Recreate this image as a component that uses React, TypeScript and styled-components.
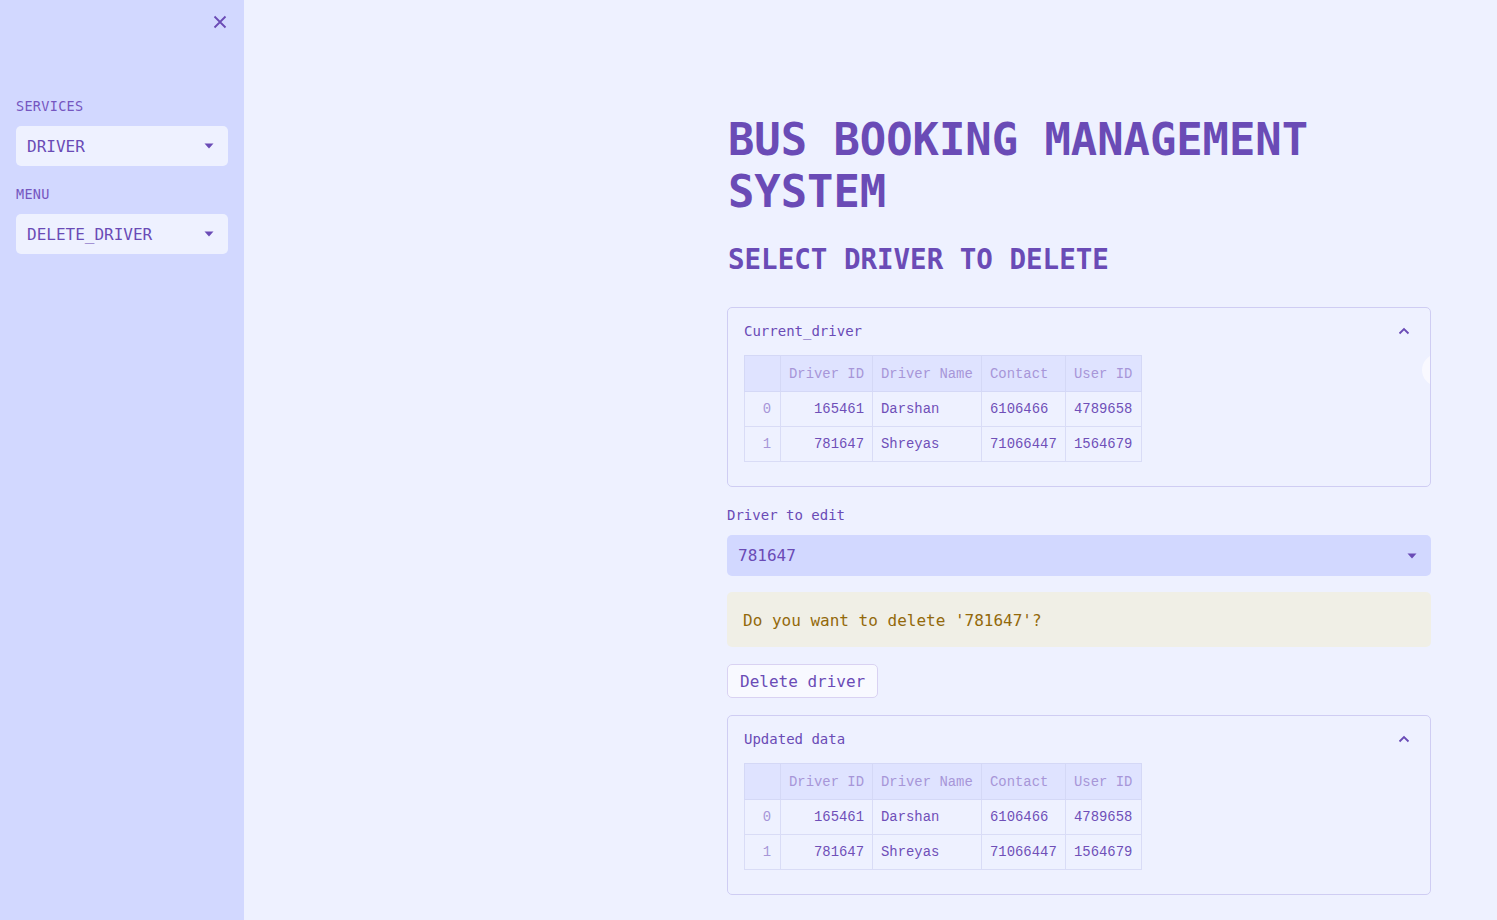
import React from "react";
import styled, { createGlobalStyle } from "styled-components";

const PURPLE = "#6a4bb6";
const MONO = `"DejaVu Sans Mono", "Liberation Mono", monospace`;
const GRID_FONT = `"Liberation Mono", "DejaVu Sans Mono", monospace`;

const GlobalStyle = createGlobalStyle`
  html, body { margin: 0; padding: 0; }
  body {
    background: #eef1ff;
    font-family: ${MONO};
    color: ${PURPLE};
  }
  * { box-sizing: border-box; }
`;

const Layout = styled.div`
  display: flex;
  min-height: 920px;
`;

const Sidebar = styled.aside`
  width: 244px;
  flex: none;
  background: #d2d8ff;
  padding: 0 16px;
  display: flex;
  flex-direction: column;
`;

const CloseRow = styled.div`
  display: flex;
  justify-content: flex-end;
  height: 44px;
  align-items: center;
  padding-right: 0;
  margin-bottom: 52px;
`;

const IconButton = styled.button`
  border: none;
  background: transparent;
  padding: 0;
  width: 16px;
  height: 16px;
  display: flex;
  align-items: center;
  justify-content: center;
  color: ${PURPLE};
  cursor: pointer;
`;

const FieldLabel = styled.div`
  font-size: 13.5px;
  line-height: 20px;
  letter-spacing: 0.3px;
  color: #7556c0;
  margin-bottom: 10px;
`;

const SelectBox = styled.div<{ $tone: "light" | "dark"; $h: number; $mb: number }>`
  height: ${(p) => p.$h}px;
  border-radius: 5px;
  background: ${(p) => (p.$tone === "light" ? "#eef1ff" : "#d2d8ff")};
  display: flex;
  align-items: center;
  justify-content: space-between;
  padding: 0 14px 0 11px;
  font-size: 16px;
  color: ${PURPLE};
  margin-bottom: ${(p) => p.$mb}px;
`;

const Caret = () => (
  <svg width="10" height="6" viewBox="0 0 10 6">
    <path d="M0.5 0.5 H9.5 L5 5.5 Z" fill={PURPLE} />
  </svg>
);

const Main = styled.main`
  flex: 1;
  display: flex;
  justify-content: flex-end;
  padding: 114px 66px 0 0;
`;

const Content = styled.div`
  width: 704px;
  display: flex;
  flex-direction: column;
`;

const Title = styled.h1`
  margin: 0;
  font-family: ${MONO};
  font-weight: 700;
  font-size: 43.8px;
  line-height: 52px;
  color: ${PURPLE};
  padding-left: 1px;
`;

const SubTitle = styled.h2`
  margin: 23px 0 30px;
  font-family: ${MONO};
  font-weight: 700;
  font-size: 27.5px;
  line-height: 36px;
  color: ${PURPLE};
  padding-left: 1px;
`;

const Expander = styled.section<{ $mb: number }>`
  position: relative;
  overflow: hidden;
  border: 1px solid #cfcdf3;
  border-radius: 5px;
  margin-bottom: ${(p) => p.$mb}px;
`;

const ExpanderHeader = styled.div`
  height: 46px;
  display: flex;
  align-items: center;
  justify-content: space-between;
  padding: 0 20px 0 16px;
  font-size: 14px;
  color: ${PURPLE};
`;

const ExpanderBody = styled.div`
  padding: 1px 16px 24px;
`;

const Bubble = styled.div`
  position: absolute;
  right: -24px;
  top: 46px;
  width: 32px;
  height: 32px;
  border-radius: 50%;
  background: #f9f9ff;
`;

const Grid = styled.table`
  border-collapse: collapse;
  table-layout: fixed;
  font-family: ${GRID_FONT};
  font-size: 13.9px;
  color: #6f4fb8;
  background: #eef1ff;
`;

const HeadCell = styled.th<{ $w: number }>`
  width: ${(p) => p.$w}px;
  height: 36px;
  padding: 0 8px;
  text-align: left;
  font-weight: 400;
  color: #a796d8;
  background: #dfe3ff;
  border: 1px solid #d4d8f6;
  white-space: nowrap;
  overflow: hidden;
`;

const Cell = styled.td<{ $align?: "left" | "right"; $muted?: boolean }>`
  height: 35px;
  padding: 0 8px;
  text-align: ${(p) => p.$align ?? "left"};
  color: ${(p) => (p.$muted ? "#a796d8" : "#6f4fb8")};
  border: 1px solid #d9dcf6;
  white-space: nowrap;
`;

const IndexCell = styled(Cell)`
  padding: 0 9px;
  background: #eef1ff;
`;

const InputLabel = styled.div`
  font-size: 14px;
  line-height: 20px;
  color: ${PURPLE};
  margin-bottom: 10px;
`;

const Warning = styled.div`
  background: #f0efe6;
  border-radius: 5px;
  padding: 19px 16px 16px;
  font-size: 16px;
  line-height: 20px;
  color: #93690b;
  margin-bottom: 17px;
`;

const ButtonRow = styled.div`
  display: flex;
  margin-bottom: 17px;
`;

const Button = styled.button`
  height: 34px;
  padding: 0 12px;
  border: 1px solid #d9d2f2;
  border-radius: 5px;
  background: #f8f9ff;
  font-family: ${MONO};
  font-size: 16px;
  color: ${PURPLE};
  cursor: pointer;
`;

const ChevronUp = () => (
  <svg width="12" height="8" viewBox="0 0 12 8">
    <path d="M1.5 6.5 L6 2 L10.5 6.5" fill="none" stroke={PURPLE} strokeWidth="1.8" />
  </svg>
);

const CloseIcon = () => (
  <svg width="14" height="14" viewBox="0 0 14 14">
    <path d="M1.5 1.5 L12.5 12.5 M12.5 1.5 L1.5 12.5" stroke={PURPLE} strokeWidth="1.8" />
  </svg>
);

type Row = { id: string; name: string; contact: string; user: string };
const rows: Row[] = [
  { id: "165461", name: "Darshan", contact: "6106466", user: "4789658" },
  { id: "781647", name: "Shreyas", contact: "71066447", user: "1564679" },
];

const DataTable = () => (
  <Grid>
    <thead>
      <tr>
        <HeadCell $w={36} />
        <HeadCell $w={92}>Driver ID</HeadCell>
        <HeadCell $w={109}>Driver Name</HeadCell>
        <HeadCell $w={84}>Contact</HeadCell>
        <HeadCell $w={76}>User ID</HeadCell>
      </tr>
    </thead>
    <tbody>
      {rows.map((r, i) => (
        <tr key={r.id}>
          <IndexCell $align="right" $muted>
            {i}
          </IndexCell>
          <Cell $align="right">{r.id}</Cell>
          <Cell>{r.name}</Cell>
          <Cell>{r.contact}</Cell>
          <Cell>{r.user}</Cell>
        </tr>
      ))}
    </tbody>
  </Grid>
);

const Panel = ({ title, bubble, mb }: { title: string; bubble?: boolean; mb: number }) => (
  <Expander $mb={mb}>
    <ExpanderHeader>
      <span>{title}</span>
      <ChevronUp />
    </ExpanderHeader>
    <ExpanderBody>
      <DataTable />
    </ExpanderBody>
    {bubble && <Bubble />}
  </Expander>
);

export default function App() {
  return (
    <>
      <GlobalStyle />
      <Layout>
        <Sidebar>
          <CloseRow>
            <IconButton aria-label="close">
              <CloseIcon />
            </IconButton>
          </CloseRow>
          <FieldLabel>SERVICES</FieldLabel>
          <SelectBox $tone="light" $h={40} $mb={18}>
            <span>DRIVER</span>
            <Caret />
          </SelectBox>
          <FieldLabel>MENU</FieldLabel>
          <SelectBox $tone="light" $h={40} $mb={18}>
            <span>DELETE_DRIVER</span>
            <Caret />
          </SelectBox>
        </Sidebar>
        <Main>
          <Content>
            <Title>BUS BOOKING MANAGEMENT SYSTEM</Title>
            <SubTitle>SELECT DRIVER TO DELETE</SubTitle>
            <Panel title="Current_driver" bubble mb={18} />
            <InputLabel>Driver to edit</InputLabel>
            <SelectBox $tone="dark" $h={41} $mb={16}>
              <span>781647</span>
              <Caret />
            </SelectBox>
            <Warning>Do you want to delete '781647'?</Warning>
            <ButtonRow>
              <Button>Delete driver</Button>
            </ButtonRow>
            <Panel title="Updated data" mb={0} />
          </Content>
        </Main>
      </Layout>
    </>
  );
}
